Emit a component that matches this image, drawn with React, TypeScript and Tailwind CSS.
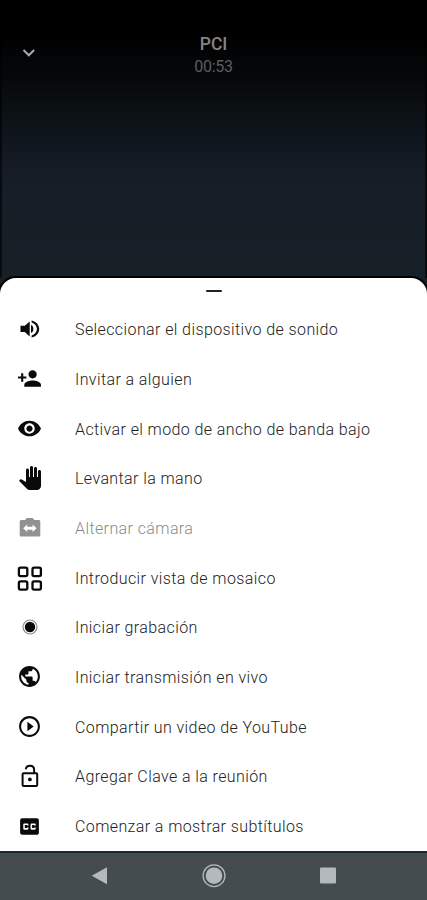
import type { ReactNode } from "react";
import {
  MdClosedCaption,
  MdPanTool,
  MdPersonAdd,
  MdPlayCircleOutline,
  MdPublic,
  MdRemoveRedEye,
} from "react-icons/md";

type MenuItem = {
  label: string;
  icon: ReactNode;
  disabled?: boolean;
};

const SoundIcon = () => (
  <svg width="24" height="24" viewBox="0 0 24 24" fill="currentColor">
    <path d="M2.500 8.800v6.200h4.300l4.900 4.400V4.400L6.800 8.800z" />
    <path d="M13 8v8c1.600-.6 2.400-2.200 2.400-4s-.8-3.400-2.400-4z" />
    <path d="M13.600 3.400v2.100c3.200 1 5.300 3.600 5.300 6.500s-2.100 5.500-5.300 6.500v2.100c4.500-1 7.600-4.400 7.600-8.600s-3.100-7.600-7.600-8.600z" />
  </svg>
);

const SwitchCameraIcon = () => (
  <svg width="24" height="24" viewBox="0 0 24 24" fill="currentColor">
    <path
      fillRule="evenodd"
      d="M3.300 4H7l1.800-2h5.800l1.800 2h4.300c.9 0 1.600.7 1.600 1.600v13.300c0 .9-.7 1.600-1.600 1.600H3.300c-.9 0-1.600-.7-1.600-1.600V5.600C1.700 4.700 2.400 4 3.300 4zM5.200 12.200l4 3.700v-2.200h5.400v2.200l4-3.700-4-3.700v2.200H9.200V8.500z"
    />
  </svg>
);

const TilesIcon = () => (
  <svg width="26" height="26" viewBox="0 0 26 26" fill="none" stroke="currentColor" strokeWidth="2.300" className="relative top-px">
    <rect x="1.900" y="1.700" width="8.400" height="8.400" rx="1.600" />
    <rect x="15.500" y="1.700" width="8.400" height="8.400" rx="1.600" />
    <rect x="1.900" y="15.300" width="8.400" height="8.400" rx="1.600" />
    <rect x="15.500" y="15.300" width="8.400" height="8.400" rx="1.600" />
  </svg>
);

const RecordIcon = () => (
  <svg width="24" height="24" viewBox="0 0 24 24">
    <circle cx="12" cy="12" r="7" fill="none" stroke="#8c8c8c" strokeWidth="1.200" />
    <circle cx="12" cy="12" r="5.200" fill="currentColor" />
  </svg>
);

const LockOpenIcon = () => (
  <svg width="24" height="24" viewBox="0 0 24 24" fill="none" stroke="currentColor" strokeWidth="2">
    <rect x="4.600" y="9.200" width="14.600" height="12.800" rx="1" />
    <path d="M7.700 5.300C8.100 3.100 9.700 1.800 11.900 1.800c2.500 0 4.200 1.700 4.200 4v3.200" />
    <circle cx="11.900" cy="15.400" r="1.900" fill="currentColor" stroke="none" />
  </svg>
);

const items: MenuItem[] = [
  { label: "Seleccionar el dispositivo de sonido", icon: <SoundIcon /> },
  { label: "Invitar a alguien", icon: <MdPersonAdd size={25} /> },
  { label: "Activar el modo de ancho de banda bajo", icon: <MdRemoveRedEye size={25} /> },
  { label: "Levantar la mano", icon: <MdPanTool size={24} /> },
  { label: "Alternar cámara", icon: <SwitchCameraIcon />, disabled: true },
  { label: "Introducir vista de mosaico", icon: <TilesIcon /> },
  { label: "Iniciar grabación", icon: <RecordIcon /> },
  { label: "Iniciar transmisión en vivo", icon: <MdPublic size={25} /> },
  { label: "Compartir un video de YouTube", icon: <MdPlayCircleOutline size={25} /> },
  { label: "Agregar Clave a la reunión", icon: <LockOpenIcon /> },
  { label: "Comenzar a mostrar subtítulos", icon: <MdClosedCaption size={25} /> },
];

const CallHeader = () => (
  <header className="relative flex flex-col items-center pt-8">
    <button className="absolute left-5 top-[48px] text-[#aaaaaa]" aria-label="Minimizar">
      <svg width="14" height="10" viewBox="0 0 14 10" fill="none" stroke="currentColor" strokeWidth="2">
        <path d="M1.500 2l5.300 5.300L12.100 2" />
      </svg>
    </button>
    <h1 className="text-[17.500px] leading-6 font-medium text-[#858585]">PCI</h1>
    <p className="text-[16px] leading-[22px] tracking-[-0.300px] text-[#5c5d5e]">00:53</p>
  </header>
);

const MenuRow = ({ label, icon, disabled }: MenuItem) => (
  <li className={`flex h-[49.700px] items-center ${disabled ? "text-[#929292]" : "text-[#0a0a0a]"}`}>
    <span className="flex w-[59px] shrink-0 justify-center">{icon}</span>
    <span
      className={`ml-4 pt-[2px] whitespace-nowrap text-[16px] font-light tracking-[0.400px] ${
        disabled ? "text-[#8a8a8a]" : "text-[#222222]"
      }`}
    >
      {label}
    </span>
  </li>
);

const NavigationBar = () => (
  <nav className="flex h-[49px] shrink-0 items-center justify-center border-t-2 border-[#192930] bg-[#444c50] text-[#b4babc]">
    <svg width="250" height="26" viewBox="0 0 250 26">
      <path d="M2.700 11.700L18 3.200v17z" fill="currentColor" />
      <circle cx="125" cy="11.700" r="10.900" fill="none" stroke="currentColor" strokeWidth="1.300" />
      <circle cx="125" cy="11.700" r="8.300" fill="currentColor" />
      <rect x="231" y="3.500" width="16" height="16" rx="1" fill="currentColor" />
    </svg>
  </nav>
);

export default function App() {
  return (
    <div className="flex h-[900px] w-[427px] flex-col overflow-hidden bg-[linear-gradient(to_bottom,#000_0px,#000_35px,#05080b_75px,#0b1012_110px,#0f151d_135px,#161d26_175px,#171f27_260px)] font-['Roboto',sans-serif]">
      <div className="h-[278px] shrink-0 border-x-2 border-black/60">
        <CallHeader />
      </div>
      <section className="flex h-[573px] shrink-0 flex-col rounded-t-[16px] bg-white shadow-[0_0_0_2px_#000]">
        <div className="flex h-[26.300px] shrink-0 justify-center pt-3">
          <span className="h-0.5 w-4 rounded-full bg-[#222222]" />
        </div>
        <ul>
          {items.map((item) => (
            <MenuRow key={item.label} {...item} />
          ))}
        </ul>
      </section>
      <NavigationBar />
    </div>
  );
}
